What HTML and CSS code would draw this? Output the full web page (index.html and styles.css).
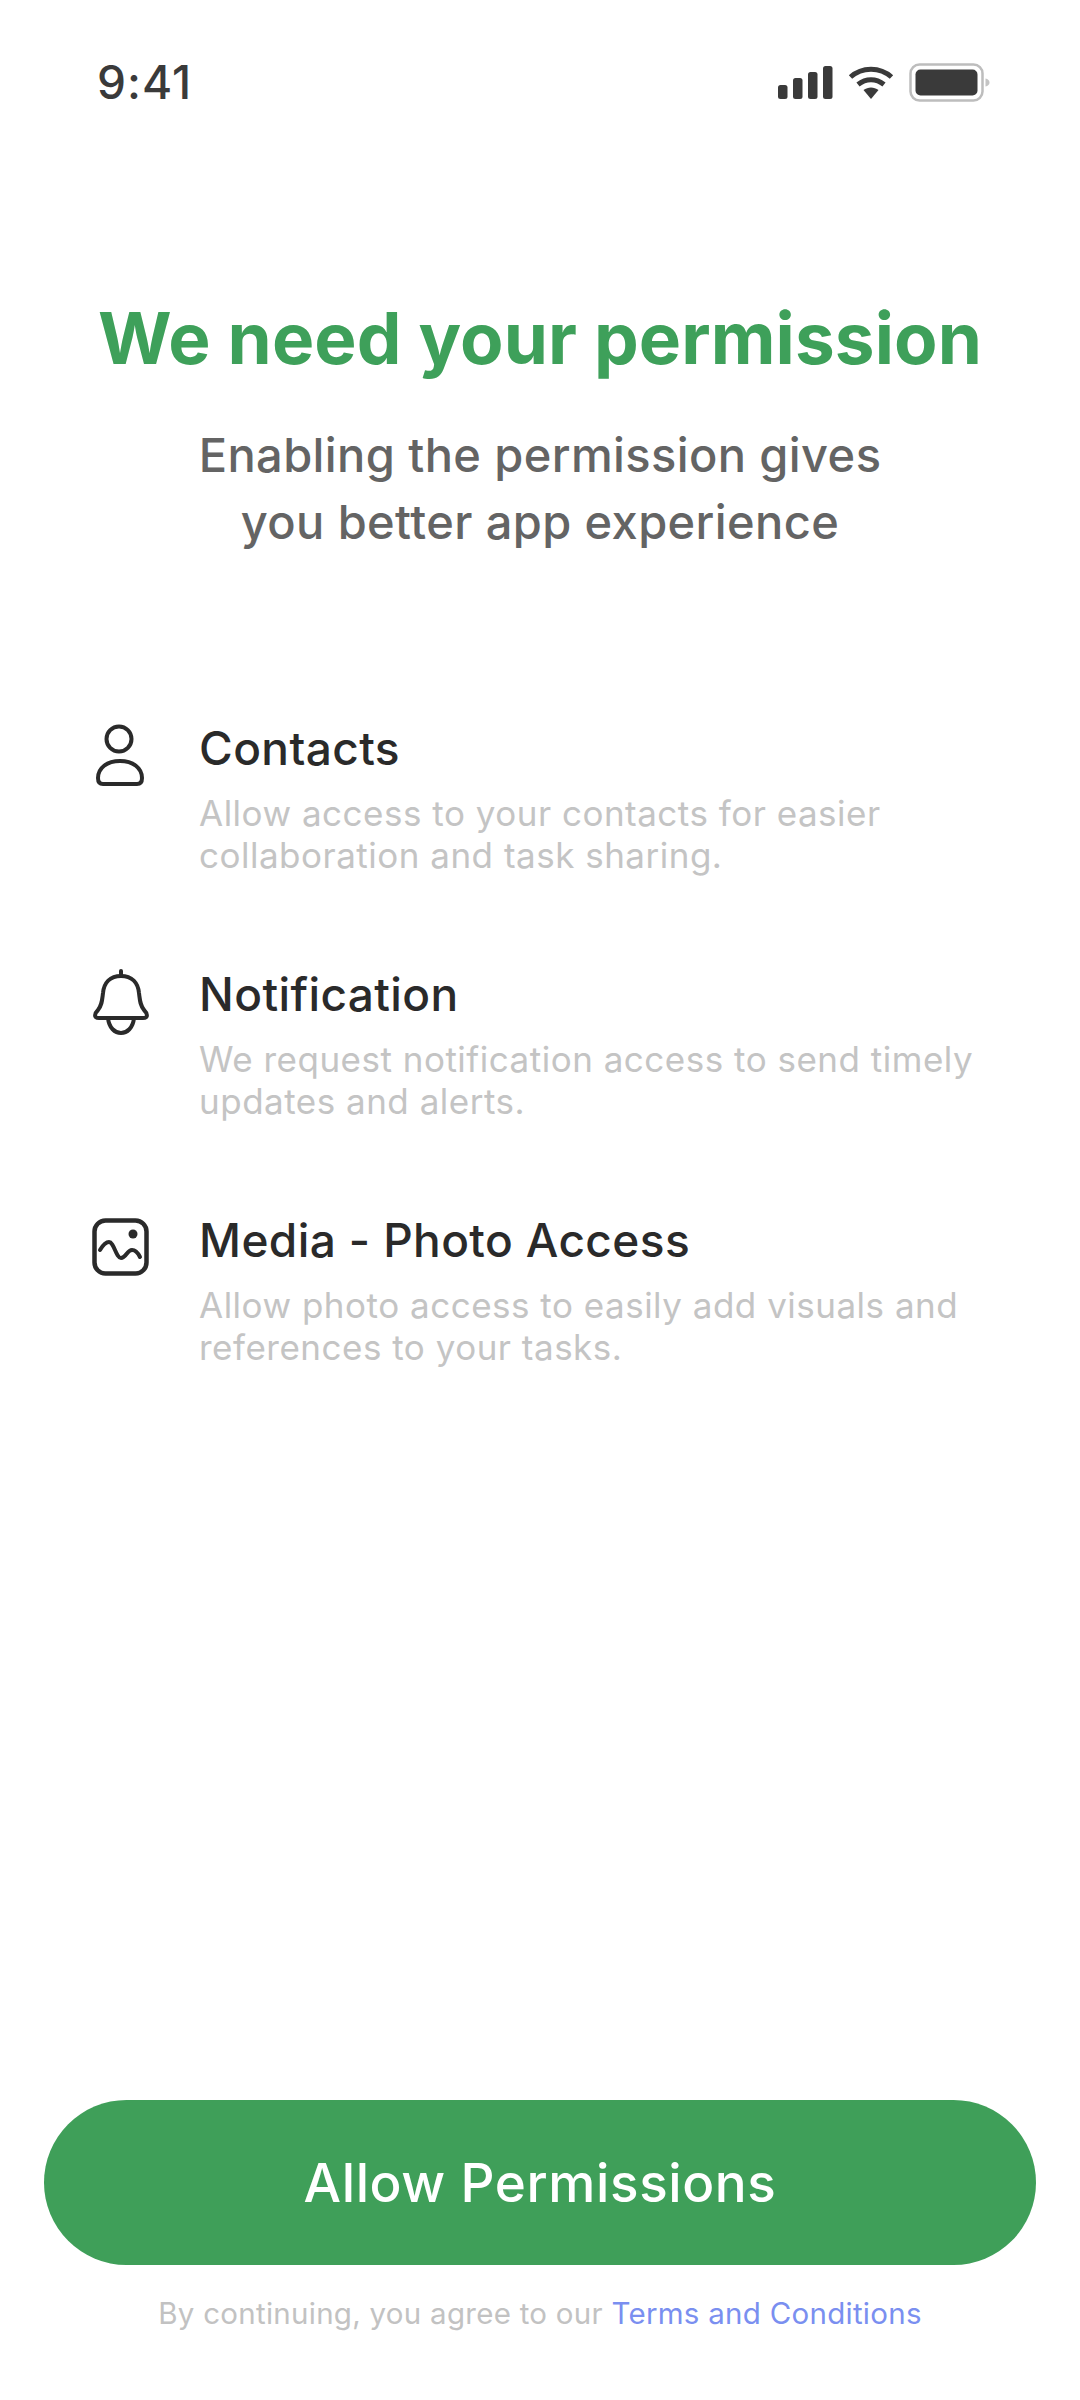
FILE: index.html
```html
<!DOCTYPE html>
<html lang="en">
<head>
<meta charset="utf-8">
<title>Permissions</title>
<link rel="stylesheet" href="styles.css">
</head>
<body>
<main class="screen">
  <header class="status">
    <span class="time">9:41</span>
    <div class="status-icons">
      <svg width="55" height="33" viewBox="0 0 55 33"><g fill="#3a3a3a"><rect x="0" y="19" width="9.500" height="14" rx="2.500"/><rect x="15" y="12" width="9.500" height="21" rx="2.500"/><rect x="30" y="6" width="9.500" height="27" rx="2.500"/><rect x="45" y="0" width="9.500" height="33" rx="2.500"/></g></svg>
      <svg width="46" height="34" viewBox="0 0 46 34"><g fill="none" stroke="#3a3a3a" stroke-width="5"><path d="M2.500 12C14 1.500 32 1.500 43.500 12"/><path d="M10 19.500C18 13 28 13 36 19.500"/></g><path d="M15.500 25C20 21.500 26 21.500 30.500 25L23 34Z" fill="#3a3a3a"/></svg>
      <svg width="81" height="39" viewBox="0 0 81 39"><rect x="1.500" y="1.500" width="72" height="36" rx="9" fill="none" stroke="#bdbdbd" stroke-width="2.500"/><rect x="6.500" y="6.500" width="62" height="26" rx="5" fill="#3a3a3a"/><path d="M76.500 15.500c2.500.5 4 2 4 4s-1.500 3.500-4 4z" fill="#c4c4c4"/></svg>
    </div>
  </header>

  <section class="intro">
    <h1 class="title">We need your permission</h1>
    <p class="subtitle">Enabling the permission gives<br>you better app experience</p>
  </section>

  <ul class="perms">
    <li class="perm">
      <svg class="perm-icon" width="60" height="68" viewBox="0 0 60 68"><g fill="none" stroke="#2a2a2a" stroke-width="4"><circle cx="29" cy="17" r="12.500"/><path d="M8 56C8 46 17 39 30 39S52 46 52 56C52 60 50 62 47 62H13C10 62 8 60 8 56Z"/></g></svg>
      <div class="perm-text">
        <h2 class="perm-title">Contacts</h2>
        <p class="perm-desc">Allow access to your contacts for easier collaboration and task sharing.</p>
      </div>
    </li>
    <li class="perm">
      <svg class="perm-icon" width="60" height="68" viewBox="0 0 60 68"><g fill="none" stroke="#2a2a2a" stroke-width="4" stroke-linejoin="round" stroke-linecap="round"><path d="M31 8C20 8 14 15 13 25C12 33 12 37 8 42C5 45 3 50 9 50H53C59 50 57 45 54 42C50 37 50 33 49 25C48 15 42 8 31 8Z"/><path d="M31 8V3"/><path d="M18 50C19 60 25 65 31 65S43 60 44 50"/></g></svg>
      <div class="perm-text">
        <h2 class="perm-title">Notification</h2>
        <p class="perm-desc">We request notification access to send timely updates and alerts.</p>
      </div>
    </li>
    <li class="perm">
      <svg class="perm-icon" width="60" height="68" viewBox="0 0 60 68"><rect x="4.500" y="6.500" width="52" height="53" rx="11" fill="none" stroke="#2a2a2a" stroke-width="4.500"/><circle cx="43" cy="20" r="4.500" fill="#2a2a2a"/><path d="M10 36C13 31 16 28 19 28C24 28 26 44 31 44C36 44 37 36 42 36C45 36 48 39 50 43" fill="none" stroke="#2a2a2a" stroke-width="4" stroke-linecap="round"/></svg>
      <div class="perm-text">
        <h2 class="perm-title">Media - Photo Access</h2>
        <p class="perm-desc">Allow photo access to easily add visuals and references to your tasks.</p>
      </div>
    </li>
  </ul>

  <footer class="actions">
    <button class="allow" type="button">Allow Permissions</button>
    <p class="terms">By continuing, you agree to our <a class="terms-link" href="#">Terms and Conditions</a></p>
  </footer>
</main>
</body>
</html>
```
FILE: styles.css
```css
* { box-sizing: border-box; }
html, body { margin: 0; padding: 0; background: #fff; }
.screen {
  width: 1080px;
  height: 2400px;
  display: flex;
  flex-direction: column;
  font-family: "Inter", "Liberation Sans", sans-serif;
  overflow: hidden;
}
.status {
  display: flex;
  justify-content: space-between;
  align-items: center;
  padding: 58px 90px 0 97px;
  height: 106px;
}
.time { font-size: 46px; font-weight: 500; color: #3a3a3a; letter-spacing: 1px; }
.status-icons { display: flex; align-items: center; gap: 15px; }
.intro { text-align: center; padding-top: 192px; }
.title { margin: 0; font-size: 71px; line-height: 80px; font-weight: 700; color: #3ea05a; letter-spacing: 0.1px; }
.subtitle { margin: 43px 0 0; font-size: 47px; line-height: 67px; font-weight: 500; color: #646464; letter-spacing: 0.4px; }
.perms { list-style: none; margin: 161px 0 0; padding: 0 40px 0 90px; display: flex; flex-direction: column; gap: 86px; }
.perm { display: flex; gap: 49px; align-items: flex-start; }
.perm-icon { flex: none; margin-top: 6px; }
.perm-text { flex: 1; }
.perm-title { margin: 0; font-size: 46px; line-height: 64px; font-weight: 500; color: #2a2a2a; letter-spacing: 0.4px; }
.perm-desc { margin: 12px 0 0; font-size: 35px; line-height: 42px; color: #c4c4c4; letter-spacing: 0.5px; }
.actions { margin-top: auto; padding: 0 44px 65px; text-align: center; }
.allow {
  display: block;
  width: 100%;
  height: 165px;
  border: 0;
  border-radius: 83px;
  background: #3f9f59;
  color: #fff;
  font: 500 53px "Inter", "Liberation Sans", sans-serif;
  letter-spacing: 0.6px;
}
.terms { margin: 26px 0 0; font-size: 29.5px; line-height: 44px; color: #c2c2c2; letter-spacing: 0.27px; }
.terms-link { color: #7a8ff0; text-decoration: none; }
```
